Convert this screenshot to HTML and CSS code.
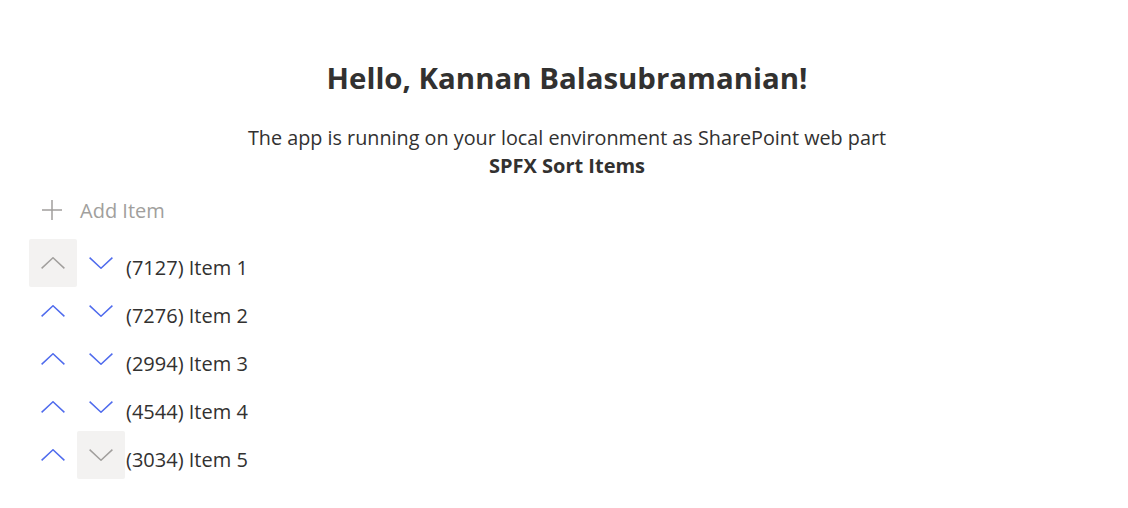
FILE: index.html
```html
<!DOCTYPE html>
<html lang="en">
<head>
<meta charset="utf-8">
<title>SPFX Sort Items</title>
<link rel="stylesheet" href="styles.css">
</head>
<body>
<div class="page">
  <div class="welcome">
    <h2 class="title">Hello, Kannan Balasubramanian!</h2>
    <div class="desc">The app is running on your local environment as SharePoint web part</div>
    <div class="desc strong">SPFX Sort Items</div>
  </div>

  <button class="add-btn" disabled>
    <svg class="plus" viewBox="0 0 20 20" width="20" height="20" aria-hidden="true">
      <path d="M10 0 V20 M0 10 H20" />
    </svg>
    <span>Add Item</span>
  </button>

  <ul class="items">
    <li class="row">
      <button class="icon-btn disabled" aria-label="Move up"><svg viewBox="0 0 24 12" width="24" height="12"><polyline points="0.6,11.4 12,0.8 23.4,11.4"/></svg></button>
      <button class="icon-btn" aria-label="Move down"><svg viewBox="0 0 24 12" width="24" height="12"><polyline points="0.6,0.6 12,11.2 23.4,0.6"/></svg></button>
      <span class="label">(7127) Item 1</span>
    </li>
    <li class="row">
      <button class="icon-btn" aria-label="Move up"><svg viewBox="0 0 24 12" width="24" height="12"><polyline points="0.6,11.4 12,0.8 23.4,11.4"/></svg></button>
      <button class="icon-btn" aria-label="Move down"><svg viewBox="0 0 24 12" width="24" height="12"><polyline points="0.6,0.6 12,11.2 23.4,0.6"/></svg></button>
      <span class="label">(7276) Item 2</span>
    </li>
    <li class="row">
      <button class="icon-btn" aria-label="Move up"><svg viewBox="0 0 24 12" width="24" height="12"><polyline points="0.6,11.4 12,0.8 23.4,11.4"/></svg></button>
      <button class="icon-btn" aria-label="Move down"><svg viewBox="0 0 24 12" width="24" height="12"><polyline points="0.6,0.6 12,11.2 23.4,0.6"/></svg></button>
      <span class="label">(2994) Item 3</span>
    </li>
    <li class="row">
      <button class="icon-btn" aria-label="Move up"><svg viewBox="0 0 24 12" width="24" height="12"><polyline points="0.6,11.4 12,0.8 23.4,11.4"/></svg></button>
      <button class="icon-btn" aria-label="Move down"><svg viewBox="0 0 24 12" width="24" height="12"><polyline points="0.6,0.6 12,11.2 23.4,0.6"/></svg></button>
      <span class="label">(4544) Item 4</span>
    </li>
    <li class="row">
      <button class="icon-btn" aria-label="Move up"><svg viewBox="0 0 24 12" width="24" height="12"><polyline points="0.6,11.4 12,0.8 23.4,11.4"/></svg></button>
      <button class="icon-btn disabled" aria-label="Move down"><svg viewBox="0 0 24 12" width="24" height="12"><polyline points="0.6,0.6 12,11.2 23.4,0.6"/></svg></button>
      <span class="label">(3034) Item 5</span>
    </li>
  </ul>
</div>
</body>
</html>
```

FILE: styles.css
```css
html, body {
  margin: 0;
  padding: 0;
  background: #ffffff;
}

body {
  font-family: "Open Sans", "Noto Sans", sans-serif;
  color: #323130;
}

.page {
  padding: 58px 0 0 29px;
}

.welcome {
  text-align: center;
  margin-left: -29px;
  padding-left: 6px;
}

.title {
  margin: 0;
  font-size: 29.4px;
  line-height: 40px;
  font-weight: 700;
  color: #323130;
}

.desc {
  font-size: 19.8px;
  line-height: 28px;
}

.title + .desc {
  margin-top: 26px;
}

.strong {
  font-weight: 700;
  font-size: 20px;
}

.add-btn {
  display: flex;
  align-items: center;
  gap: 18px;
  height: 40px;
  margin-top: 10px;
  padding: 0 0 0 13px;
  border: 0;
  background: transparent;
  font-family: inherit;
  font-size: 20px;
  color: #a19f9d;
}

.plus {
  stroke: #a19f9d;
  stroke-width: 1.5;
  fill: none;
}

.items {
  list-style: none;
  margin: 9px 0 0 0;
  padding: 0;
}

.row {
  display: flex;
  align-items: center;
  height: 48px;
}

.icon-btn {
  width: 48px;
  height: 48px;
  padding: 0;
  border: 0;
  border-radius: 2px;
  background: transparent;
  display: flex;
  align-items: center;
  justify-content: center;
}

.icon-btn svg {
  fill: none;
  stroke: #4f6bed;
  stroke-width: 1.5;
}

.icon-btn.disabled {
  background: #f3f2f1;
}

.icon-btn.disabled svg {
  stroke: #a19f9d;
}

.label {
  margin-left: 1px;
  padding-top: 10px;
  font-size: 20px;
  line-height: 28px;
}
```
